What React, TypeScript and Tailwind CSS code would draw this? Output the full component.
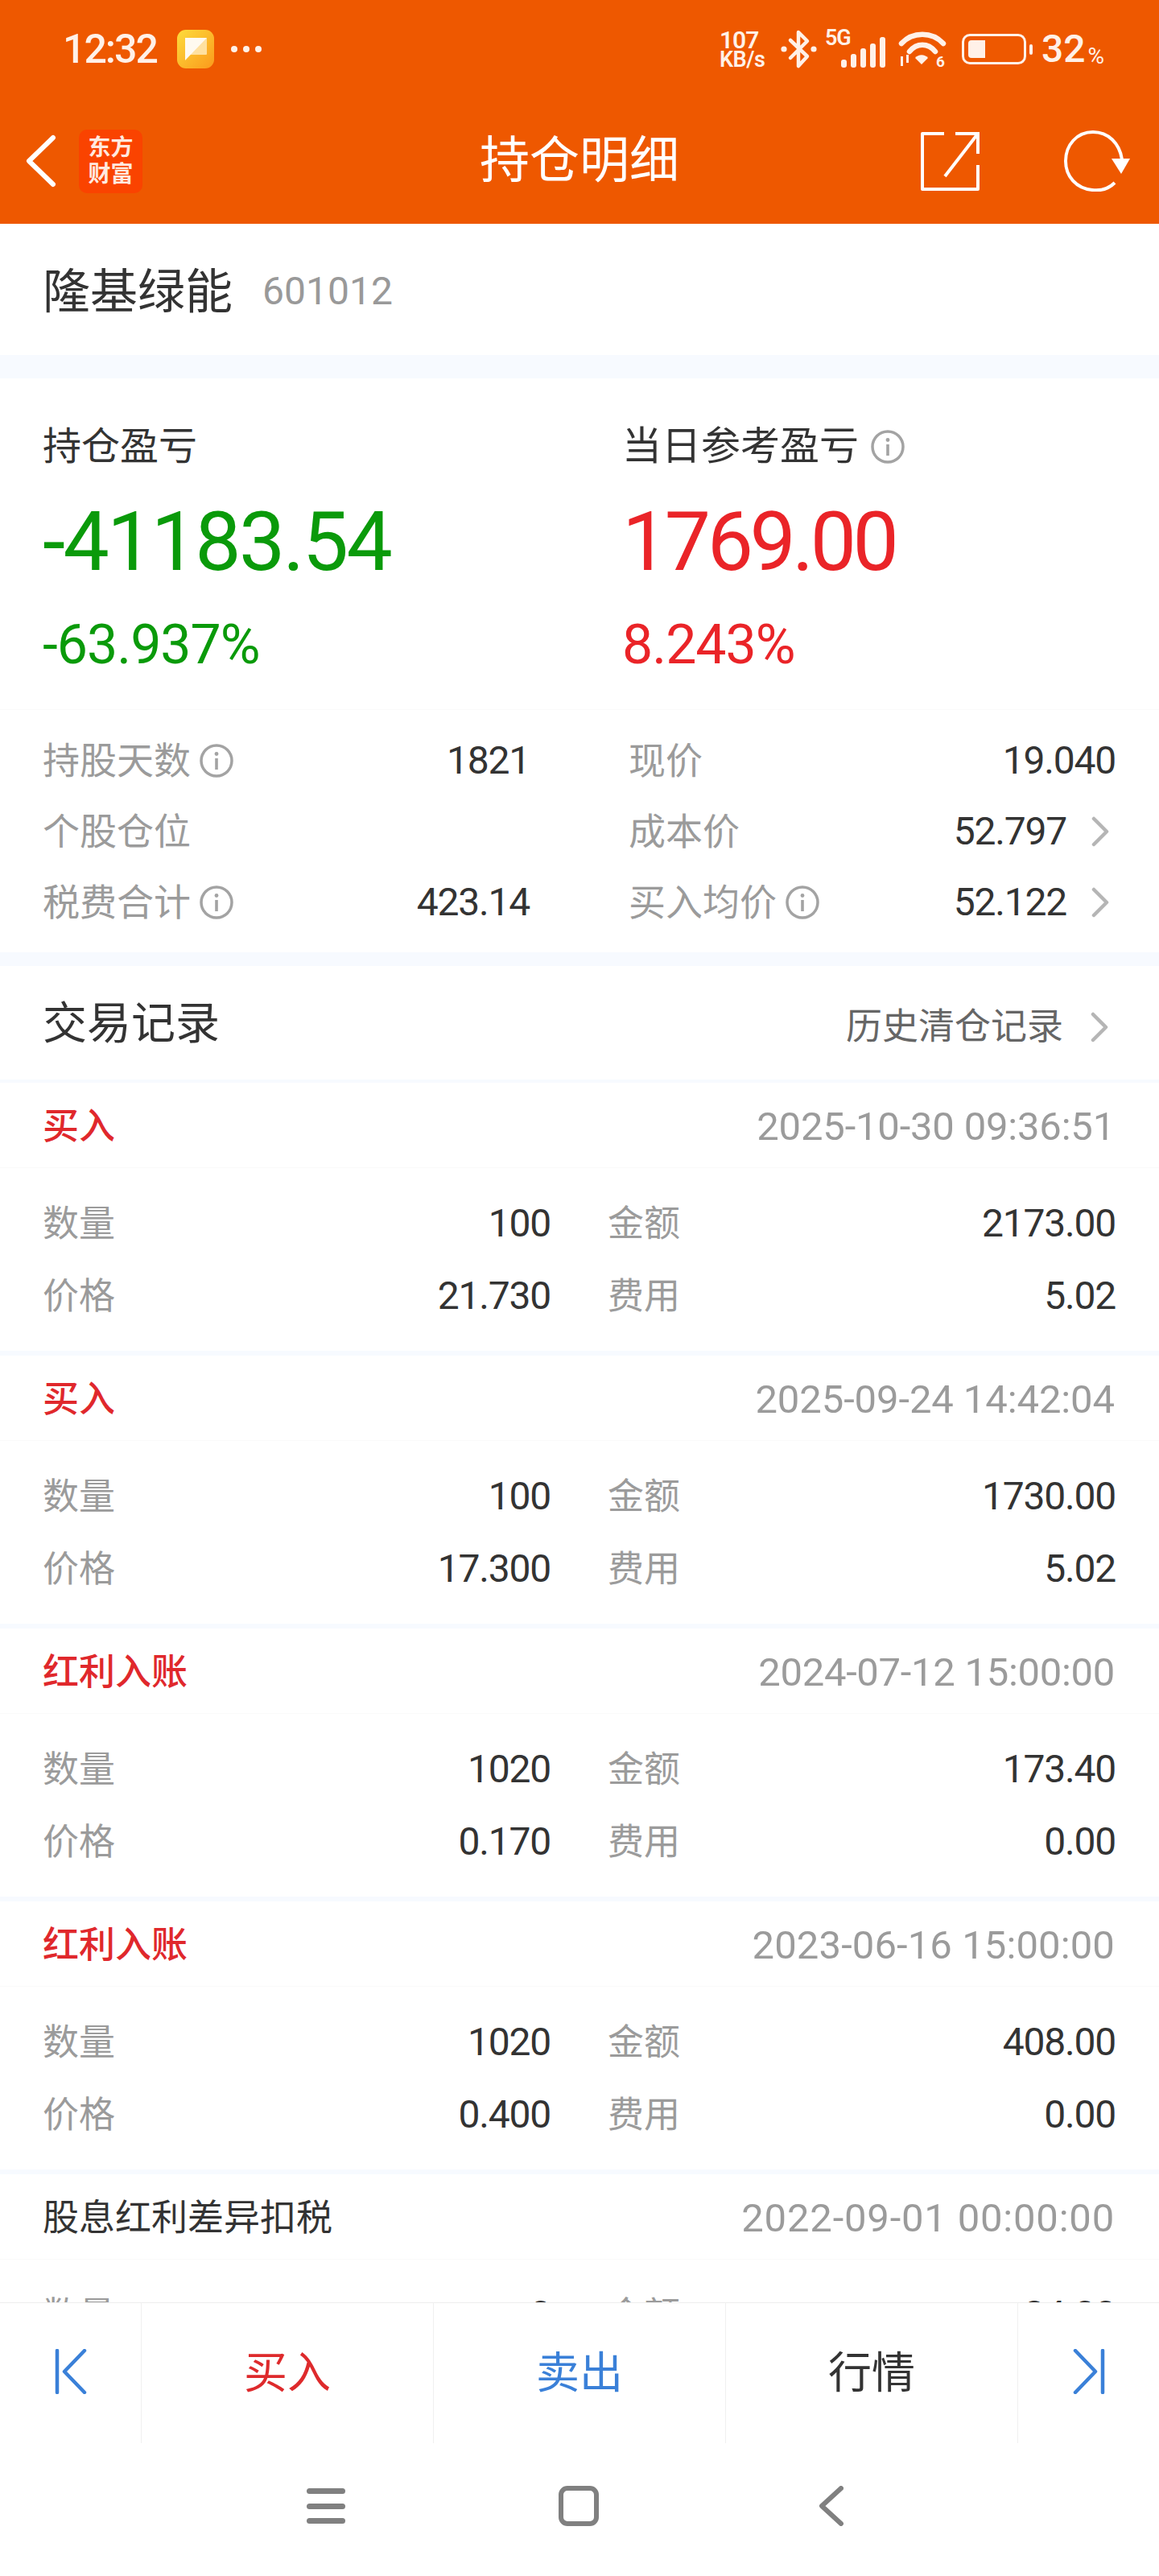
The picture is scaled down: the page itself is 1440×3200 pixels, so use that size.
import React from 'react';

const FONT = "font-['Roboto','Noto_Sans_CJK_SC',sans-serif]";

const InfoIcon = ({ wide }: { wide?: boolean }) => (
  <svg width="44" height="44" viewBox="0 0 44 44" className={`shrink-0 ${wide ? 'ml-[14px]' : 'ml-[10px]'}`}>
    <circle cx="22" cy="22" r="19" fill="none" stroke="#a3a3a3" strokeWidth="3.5" />
    <circle cx="22" cy="13.5" r="2.4" fill="#a3a3a3" />
    <rect x="20.2" y="19" width="3.6" height="14" fill="#a3a3a3" />
  </svg>
);

const Chevron = () => (
  <svg width="22" height="38" viewBox="0 0 22 38" className="shrink-0">
    <path d="M3 3 L19 19 L3 35" fill="none" stroke="#b5b5b5" strokeWidth="4.5" strokeLinecap="round" strokeLinejoin="round" />
  </svg>
);

const StatusBar = () => (
  <div className="h-[122px] flex items-center justify-between pl-[78px] pr-[68px] text-[#fff1e8]">
    <div className="flex items-center">
      <span className="text-[50px] leading-none font-medium tracking-[-2px] w-[142px]">12:32</span>
      <svg width="46" height="48" viewBox="0 0 46 48">
        <defs>
          <linearGradient id="noteGrad" x1="0" y1="0" x2="1" y2="1">
            <stop offset="0%" stopColor="#fddc3c" />
            <stop offset="100%" stopColor="#fb9a1c" />
          </linearGradient>
        </defs>
        <rect width="46" height="48" rx="11" fill="url(#noteGrad)" />
        <rect x="10" y="10" width="27" height="21" rx="1" fill="#ffe1a0" />
        <path d="M10 10 H37 L10 38 Z" fill="#fffaf0" />
      </svg>
      <div className="flex gap-[7px] ml-[21px]">
        <div className="w-[8px] h-[8px] rounded-full bg-[#fff1e8]" />
        <div className="w-[8px] h-[8px] rounded-full bg-[#fff1e8]" />
        <div className="w-[8px] h-[8px] rounded-full bg-[#fff1e8]" />
      </div>
    </div>
    <div className="flex items-center">
      <div className="flex flex-col font-semibold w-[72px]">
        <span className="text-[30px] leading-[25px] tracking-[-1px]">107</span>
        <span className="text-[27px] leading-[24px] tracking-[-0.5px] whitespace-nowrap">KB/s</span>
      </div>
      <svg width="46" height="50" viewBox="0 0 46 50" className="ml-[4px]">
        <path d="M12 14 L33 34 L22 46 V4 L33 15 L12 36" fill="none" stroke="#fff1e8" strokeWidth="4.5" strokeLinejoin="round" strokeLinecap="round" />
        <circle cx="4" cy="25" r="3.6" fill="#fff1e8" />
        <circle cx="41" cy="25" r="3.6" fill="#fff1e8" />
      </svg>
      <div className="relative w-[76px] h-[50px] ml-[9px]">
        <span className="absolute left-0 top-[-2px] text-[27px] leading-[26px] font-semibold tracking-[-1px]">5G</span>
        <svg width="56" height="38" viewBox="0 0 56 38" className="absolute right-0 bottom-[2px]">
          <rect x="0" y="28" width="7" height="10" rx="3" fill="#fff1e8" />
          <rect x="12" y="21" width="7" height="17" rx="3" fill="#fff1e8" />
          <rect x="24" y="14" width="7" height="24" rx="3" fill="#fff1e8" />
          <rect x="36" y="8" width="7" height="30" rx="3" fill="#fff1e8" />
          <rect x="48" y="0" width="7" height="38" rx="3" fill="#fff1e8" />
        </svg>
      </div>
      <svg width="60" height="46" viewBox="0 0 60 46" className="ml-[15px] overflow-visible">
        <path d="M4 16 C18 1 42 1 56 16" fill="none" stroke="#fff1e8" strokeWidth="6.5" strokeLinecap="round" />
        <path d="M14 26 C23 15 37 15 46 26" fill="none" stroke="#fff1e8" strokeWidth="6.5" strokeLinecap="round" />
        <path d="M29 42 L21 34 C25 29 33 29 37 34 Z" fill="#fff1e8" />
        <rect x="3" y="32" width="3" height="12" fill="#fff1e8" />
        <rect x="10" y="30" width="3" height="10" fill="#fff1e8" />
        <text x="47" y="45" fontSize="19" fontWeight="700" fill="#fff1e8">6</text>
      </svg>
      <div className="relative w-[80px] h-[38px] ml-[19px] mr-[7px] border-[3px] border-[#fff1e8] rounded-[10px] p-[5px]">
        <div className="w-[21px] h-full bg-[#fff1e8] rounded-l-[4px]" />
        <div className="absolute right-[-11px] top-[10px] w-[4px] h-[13px] bg-[#fff1e8] rounded-full" />
      </div>
      <span className="text-[48px] leading-none font-medium ml-[12px]">32</span>
      <span className="text-[28px] leading-none ml-[3px] self-end mb-[2px]">%</span>
    </div>
  </div>
);

const TitleBar = () => (
  <div className="h-[156px] grid grid-cols-3 items-center text-white">
    <div className="flex items-center pl-[31px]">
      <svg width="40" height="66" viewBox="0 0 40 66">
        <path d="M35 4 L5 33 L35 62" fill="none" stroke="white" strokeWidth="6" strokeLinecap="round" strokeLinejoin="round" />
      </svg>
      <div className="ml-[27px] w-[79px] h-[79px] rounded-[10px] bg-[#fa4300] flex items-center justify-center text-center text-[28px] leading-[33px] font-bold text-[#ffe9df]">
        东方<br />财富
      </div>
    </div>
    <div className="text-[62px] leading-none text-center">持仓明细</div>
    <div className="flex items-center justify-end pr-[36px]">
      <svg width="74" height="74" viewBox="0 0 74 74">
        <path d="M30 3 H3 V72 H72 V42" fill="none" stroke="white" strokeWidth="4" strokeLinejoin="round" />
        <path d="M44 3 H72 V28" fill="none" stroke="white" strokeWidth="4" />
        <path d="M72 3 L31 56" fill="none" stroke="white" strokeWidth="4" />
      </svg>
      <svg width="82" height="76" viewBox="0 0 82 76" className="ml-[105px]">
        <path d="M63 65 C54 74 43 75 35 74 C15 72 2 57 2 38 C2 18 16 2 36 2 C55 2 69 16 72 36" fill="none" stroke="white" strokeWidth="4" />
        <path d="M59 35 H82 L71 54 Z" fill="white" />
      </svg>
    </div>
  </div>
);

const SummaryRow = ({ label, info, value, chevron, right }: { label: string; info?: boolean; value?: string; chevron?: boolean; right?: boolean }) => (
  <div className={`h-[88px] flex items-center ${right ? 'pl-[6px]' : ''}`}>
    <span className="text-[46px] text-[#9b9b9b] leading-none">{label}</span>
    {info && <InfoIcon />}
    <span className={`ml-auto text-[48px] text-[#333] leading-none tracking-[-1.2px] ${chevron ? 'mr-[31px]' : ''}`}>{value}</span>
    {chevron && <span className="mr-[8px] flex"><Chevron /></span>}
  </div>
);

const Summary = () => (
  <div className="bg-white h-[713px]">
    <div className="h-[412px] border-b border-[#fafafa] pl-[53px] pr-[54px] grid grid-cols-[720px_1fr] pt-[56px]">
      <div>
        <div className="text-[48px] leading-[58px] text-[#333]">持仓盈亏</div>
        <div className="text-[102px] leading-[120px] text-[#0a9a0a] mt-[29px] tracking-[-2.7px]">-41183.54</div>
        <div className="text-[68px] leading-[70px] text-[#0a9a0a] mt-[33px] tracking-[-1px]">-63.937%</div>
      </div>
      <div>
        <div className="flex items-center text-[49px] leading-[58px] text-[#333]">当日参考盈亏<InfoIcon wide /></div>
        <div className="text-[102px] leading-[120px] text-[#ea2428] mt-[29px] tracking-[-4.5px]">1769.00</div>
        <div className="text-[68px] leading-[70px] text-[#ea2428] mt-[33px] tracking-[-1px]">8.243%</div>
      </div>
    </div>
    <div className="pl-[53px] pr-[54px] grid grid-cols-[605px_1fr] gap-x-[117px] pt-[19px]">
      <div>
        <SummaryRow label="持股天数" info value="1821" />
        <SummaryRow label="个股仓位" />
        <SummaryRow label="税费合计" info value="423.14" />
      </div>
      <div>
        <SummaryRow right label="现价" value="19.040" />
        <SummaryRow right label="成本价" value="52.797" chevron />
        <SummaryRow right label="买入均价" info value="52.122" chevron />
      </div>
    </div>
  </div>
);

const Divider = () => <div className="h-[6px] bg-[#f7faff]" />;

interface Trade {
  type: string;
  red?: boolean;
  time: string;
  timeTracking: string;
  qty: string;
  amount: string;
  price?: string;
  fee?: string;
}

const trades: Trade[] = [
  { type: '买入', red: true, time: '2025-10-30 09:36:51', timeTracking: 'tracking-[-0.2px]', qty: '100', amount: '2173.00', price: '21.730', fee: '5.02' },
  { type: '买入', red: true, time: '2025-09-24 14:42:04', timeTracking: 'tracking-[-0.1px]', qty: '100', amount: '1730.00', price: '17.300', fee: '5.02' },
  { type: '红利入账', red: true, time: '2024-07-12 15:00:00', timeTracking: 'tracking-[-0.3px]', qty: '1020', amount: '173.40', price: '0.170', fee: '0.00' },
  { type: '红利入账', red: true, time: '2023-06-16 15:00:00', timeTracking: 'tracking-[0.1px]', qty: '1020', amount: '408.00', price: '0.400', fee: '0.00' },
  // last one runs under the bottom bar, only the top of its first row shows
  { type: '股息红利差异扣税', time: '2022-09-01 00:00:00', timeTracking: 'tracking-[0.8px]', qty: '0', amount: '84.00' },
];

const TradeCell = ({ label, value }: { label: string; value: string }) => (
  <div className="h-[90px] flex items-center justify-between">
    <span className="text-[45px] text-[#9b9b9b] leading-none">{label}</span>
    <span className="text-[48px] text-[#333] leading-none tracking-[-1.2px]">{value}</span>
  </div>
);

const TradeItem = ({ trade }: { trade: Trade }) => (
  <div className="bg-white">
    <div className="h-[106px] pl-[53px] pr-[55px] pt-[3px] flex items-center justify-between border-b border-[#fafafa]">
      <span className={`text-[45px] leading-none ${trade.red ? 'text-[#e0282c] font-medium' : 'text-[#333]'}`}>{trade.type}</span>
      <span className={`text-[49px] leading-none text-[#9b9b9b] ${trade.timeTracking}`}>{trade.time}</span>
    </div>
    <div className="pl-[53px] pr-[54px] pt-[24px] pb-[23px] grid grid-cols-[631px_1fr] gap-x-[71px]">
      <TradeCell label="数量" value={trade.qty} />
      <TradeCell label="金额" value={trade.amount} />
      {trade.price && <TradeCell label="价格" value={trade.price} />}
      {trade.fee && <TradeCell label="费用" value={trade.fee} />}
    </div>
    <Divider />
  </div>
);

const SkipIcon = ({ end }: { end?: boolean }) => (
  <svg width="40" height="56" viewBox="0 0 40 56" className={end ? '-scale-x-100' : ''}>
    <path d="M3 2 V54" stroke="#3a80d8" strokeWidth="4.5" strokeLinecap="round" />
    <path d="M37 2 L12 28 L37 54" fill="none" stroke="#3a80d8" strokeWidth="4.5" strokeLinecap="round" strokeLinejoin="round" />
  </svg>
);

const BottomBar = () => (
  <div className="h-[175px] bg-white border-t border-[#eeeeee] grid grid-cols-[175px_363px_363px_363px_176px] shrink-0">
    <div className="flex items-center justify-center pb-[4px]"><SkipIcon /></div>
    <div className="flex items-center justify-center border-l border-[#f0f0f0] text-[54px] text-[#de2a2c]">买入</div>
    <div className="flex items-center justify-center border-l border-[#f0f0f0] text-[54px] text-[#3a80d8]">卖出</div>
    <div className="flex items-center justify-center border-l border-[#f0f0f0] text-[54px] text-[#333]">行情</div>
    <div className="flex items-center justify-center border-l border-[#f0f0f0] pb-[4px]"><SkipIcon end /></div>
  </div>
);

const NavBar = () => (
  <div className="h-[165px] bg-white shrink-0 flex items-start justify-center pt-[53px] pr-[11px]">
    <div className="w-[48px] h-[50px] flex flex-col justify-between py-[3px] mr-[265px]">
      <div className="h-[7px] rounded-full bg-[#808080]" />
      <div className="h-[7px] rounded-full bg-[#808080]" />
      <div className="h-[7px] rounded-full bg-[#808080]" />
    </div>
    <div className="w-[50px] h-[50px] border-[6px] border-[#808080] rounded-[11px] mr-[274px]" />
    <svg width="30" height="50" viewBox="0 0 30 50">
      <path d="M27 3 L3 25 L27 47" fill="none" stroke="#808080" strokeWidth="6" strokeLinecap="round" strokeLinejoin="round" />
    </svg>
  </div>
);

export default function App() {
  return (
    <div className={`w-[1440px] h-[3200px] flex flex-col overflow-hidden bg-white ${FONT}`}>
      <div className="bg-[#ee5800] shrink-0">
        <StatusBar />
        <TitleBar />
      </div>
      <div className="flex-1 overflow-hidden">
        <div className="h-[163px] bg-white flex items-center pl-[53px] pr-[55px] pt-[5px]">
          <span className="text-[59px] leading-none text-[#333]">隆基绿能</span>
          <span className="text-[48px] leading-none text-[#999] ml-[37px]">601012</span>
        </div>
        <div className="h-[29px] bg-[#f7faff]" />
        <Summary />
        <div className="h-[17px] bg-[#f7faff]" />
        <div className="h-[141px] bg-white flex items-center justify-between pl-[53px] pr-[63px] pt-[2px]">
          <span className="text-[55px] leading-none text-[#333]">交易记录</span>
          <span className="flex items-center text-[45px] leading-none text-[#666] pt-[8px]">
            历史清仓记录
            <span className="ml-[34px] flex"><Chevron /></span>
          </span>
        </div>
        <div className="h-[4px] bg-[#f7faff]" />
        {trades.map(t => <TradeItem key={t.time} trade={t} />)}
      </div>
      <BottomBar />
      <NavBar />
    </div>
  );
}
